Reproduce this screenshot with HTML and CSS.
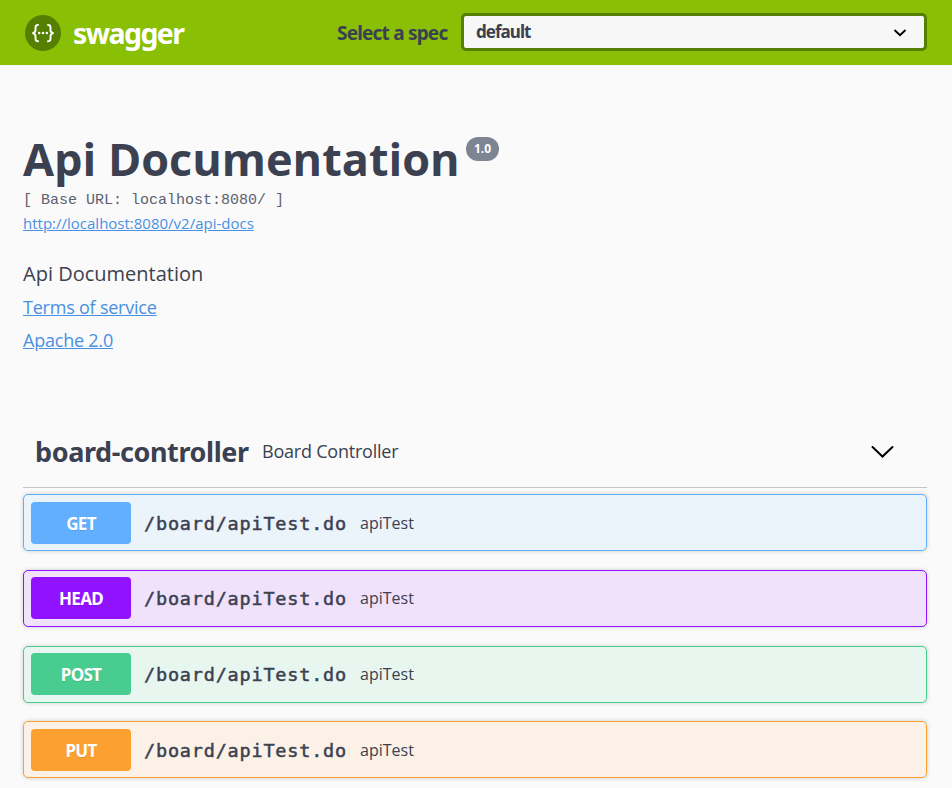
FILE: index.html
```html
<!DOCTYPE html>
<html lang="en">
<head>
<meta charset="utf-8">
<title>Swagger UI</title>
<link rel="stylesheet" href="styles.css">
</head>
<body>
<header class="topbar">
  <a class="brand">
    <svg class="logo" viewBox="0 0 36 36" fill="none" stroke="#fff" stroke-width="1.9">
      <circle cx="18" cy="18" r="18" fill="#547f00" stroke="none"/>
      <path d="M13.800 9.900h-.7c-1.900 0-2.600.9-2.600 2.500v2.800c0 1.700-1 2.600-3.100 2.900 2.100.3 3.100 1.200 3.100 2.900v2.800c0 1.600.7 2.500 2.600 2.500h.7M22.200 9.900h.7c1.900 0 2.600.9 2.600 2.500v2.800c0 1.700 1 2.600 3.100 2.900-2.100.3-3.100 1.200-3.100 2.900v2.800c0 1.600-.7 2.500-2.600 2.500h-.7"/>
      <g fill="#fff" stroke="none"><circle cx="14.200" cy="18.100" r="1.250"/><circle cx="18" cy="18.100" r="1.250"/><circle cx="21.800" cy="18.100" r="1.250"/></g>
    </svg>
    <span class="brand-name">swagger</span>
  </a>
  <div class="spec">
    <span class="spec-label">Select a spec</span>
    <div class="select"><span class="select-value">default</span>
      <svg class="select-arrow" viewBox="0 0 14 10" fill="none" stroke="#000" stroke-width="1.900"><path d="M1.500 2 7 7.300 12.500 2"/></svg>
    </div>
  </div>
</header>
<main class="page">
  <section class="info">
    <h1 class="title"><span class="title-text">Api Documentation</span><span class="version">1.0</span></h1>
    <pre class="base-url">[ Base URL: localhost:8080/ ]</pre>
    <a class="docs-link" href="#"><span>http://localhost:8080/v2/api-docs</span></a>
    <p class="description">Api Documentation</p>
    <a class="info-link terms" href="#">Terms of service</a>
    <a class="info-link" href="#">Apache 2.0</a>
  </section>
  <section class="tag">
    <div class="tag-head">
      <h2 class="tag-name">board-controller</h2>
      <span class="tag-desc">Board Controller</span>
      <svg class="tag-arrow" viewBox="0 0 24 16" fill="none" stroke="#000" stroke-width="2" stroke-linecap="round"><path d="M2.500 3 12.500 12.500 22.500 3"/></svg>
    </div>
    <div class="operations">
      <div class="op get"><span class="method">GET</span><span class="path">/board/apiTest.do</span><span class="summary">apiTest</span></div>
      <div class="op head"><span class="method">HEAD</span><span class="path">/board/apiTest.do</span><span class="summary">apiTest</span></div>
      <div class="op post"><span class="method">POST</span><span class="path">/board/apiTest.do</span><span class="summary">apiTest</span></div>
      <div class="op put"><span class="method">PUT</span><span class="path">/board/apiTest.do</span><span class="summary">apiTest</span></div>
    </div>
  </section>
</main>
</body>
</html>
```
FILE: styles.css
```css
* { box-sizing: border-box; }
html, body { margin: 0; height: 788px; overflow: hidden; }
body { background: #fafafa; color: #3b4151; font-family: "Open Sans", sans-serif; }
h1, h2, p, pre { margin: 0; }
.topbar { height: 65px; background: #89bf04; display: flex; align-items: center; padding: 0 25px; }
.brand { display: flex; align-items: center; flex: 1; }
.logo { width: 36px; height: 36px; margin-top: 1px; }
.brand-name { margin-left: 12px; color: #fff; font: 700 28.5px/40px "Noto Sans", sans-serif; letter-spacing: -1.6px; }
.spec { display: flex; align-items: center; }
.spec-label { width: 124px; font: 700 19px/30px "Noto Sans", sans-serif; letter-spacing: -.8px; white-space: nowrap; }
.select { width: 466px; height: 38px; margin-bottom: 1px; border: 3px solid #547f00; border-radius: 5px; background: #f7f7f7; display: flex; align-items: center; justify-content: space-between; padding: 0 17px 0 12px; }
.select-value { font: 700 17px/24px "Noto Sans", sans-serif; letter-spacing: -.95px; }
.select-arrow { width: 14px; height: 10px; margin-top: 1px; }
.page { padding: 64px 25px 0 23px; }
.title { display: flex; height: 60px; font-size: 45px; line-height: 60px; }
.title-text { width: 435px; white-space: nowrap; }
.version { height: 24px; width: 33px; margin: 8px 0 0 8px; border-radius: 12px; background: #7d8492; color: #fff; font-size: 12px; line-height: 24px; text-align: center; }
.base-url { margin-top: 2px; color: #5c6170; font: 15px/20px "Liberation Mono", monospace; }
.docs-link { display: block; margin-top: -2px; font-size: 15px; line-height: 28px; }
a { color: #4990e2; }
.description { margin-top: 23px; font-size: 20px; line-height: 28px; }
.info-link { display: block; width: max-content; font-size: 18px; line-height: 33px; letter-spacing: -.22px; }
.terms { margin-top: 3px; }
.tag { margin-top: 59px; }
.tag-head { height: 72px; border-bottom: 1px solid #c3c4c6; display: flex; align-items: center; padding: 0 33px 0 12px; }
.tag-name { width: 227px; font: 700 27px/38px "Noto Sans", sans-serif; letter-spacing: -.4px; white-space: nowrap; }
.tag-desc { flex: 1; margin-top: -2px; font-size: 18px; line-height: 26px; letter-spacing: -.22px; }
.tag-arrow { width: 24px; height: 16px; }
.operations { padding-top: 6px; display: grid; gap: 18.75px; }
.op { height: 57px; display: flex; align-items: center; padding: 0 7px; border: 1px solid; border-radius: 5px; box-shadow: 0 0 4px rgba(0,0,0,.19); }
.method { width: 100px; height: 42px; border-radius: 4px; color: #fff; text-align: center; font: 700 17px/43px "Noto Sans", sans-serif; letter-spacing: -.7px; text-shadow: 0 1px 0 rgba(0,0,0,.1); }
.path { width: 229px; padding: 2px 0 0 13px; font: 400 18.5px/26px "DejaVu Sans Mono", monospace; letter-spacing: .8px; white-space: nowrap; -webkit-text-stroke: .5px #3b4151; }
.summary { font-size: 16px; line-height: 24px; }
.get { background: #ebf3fb; border-color: #61affe; }
.get .method { background: #61affe; }
.head { background: #f1e2fc; border-color: #9012fe; }
.head .method { background: #9012fe; }
.post { background: #e8f6f0; border-color: #49cc90; }
.post .method { background: #49cc90; }
.put { background: #fbf1e6; border-color: #fca130; }
.put .method { background: #fca130; }
```
